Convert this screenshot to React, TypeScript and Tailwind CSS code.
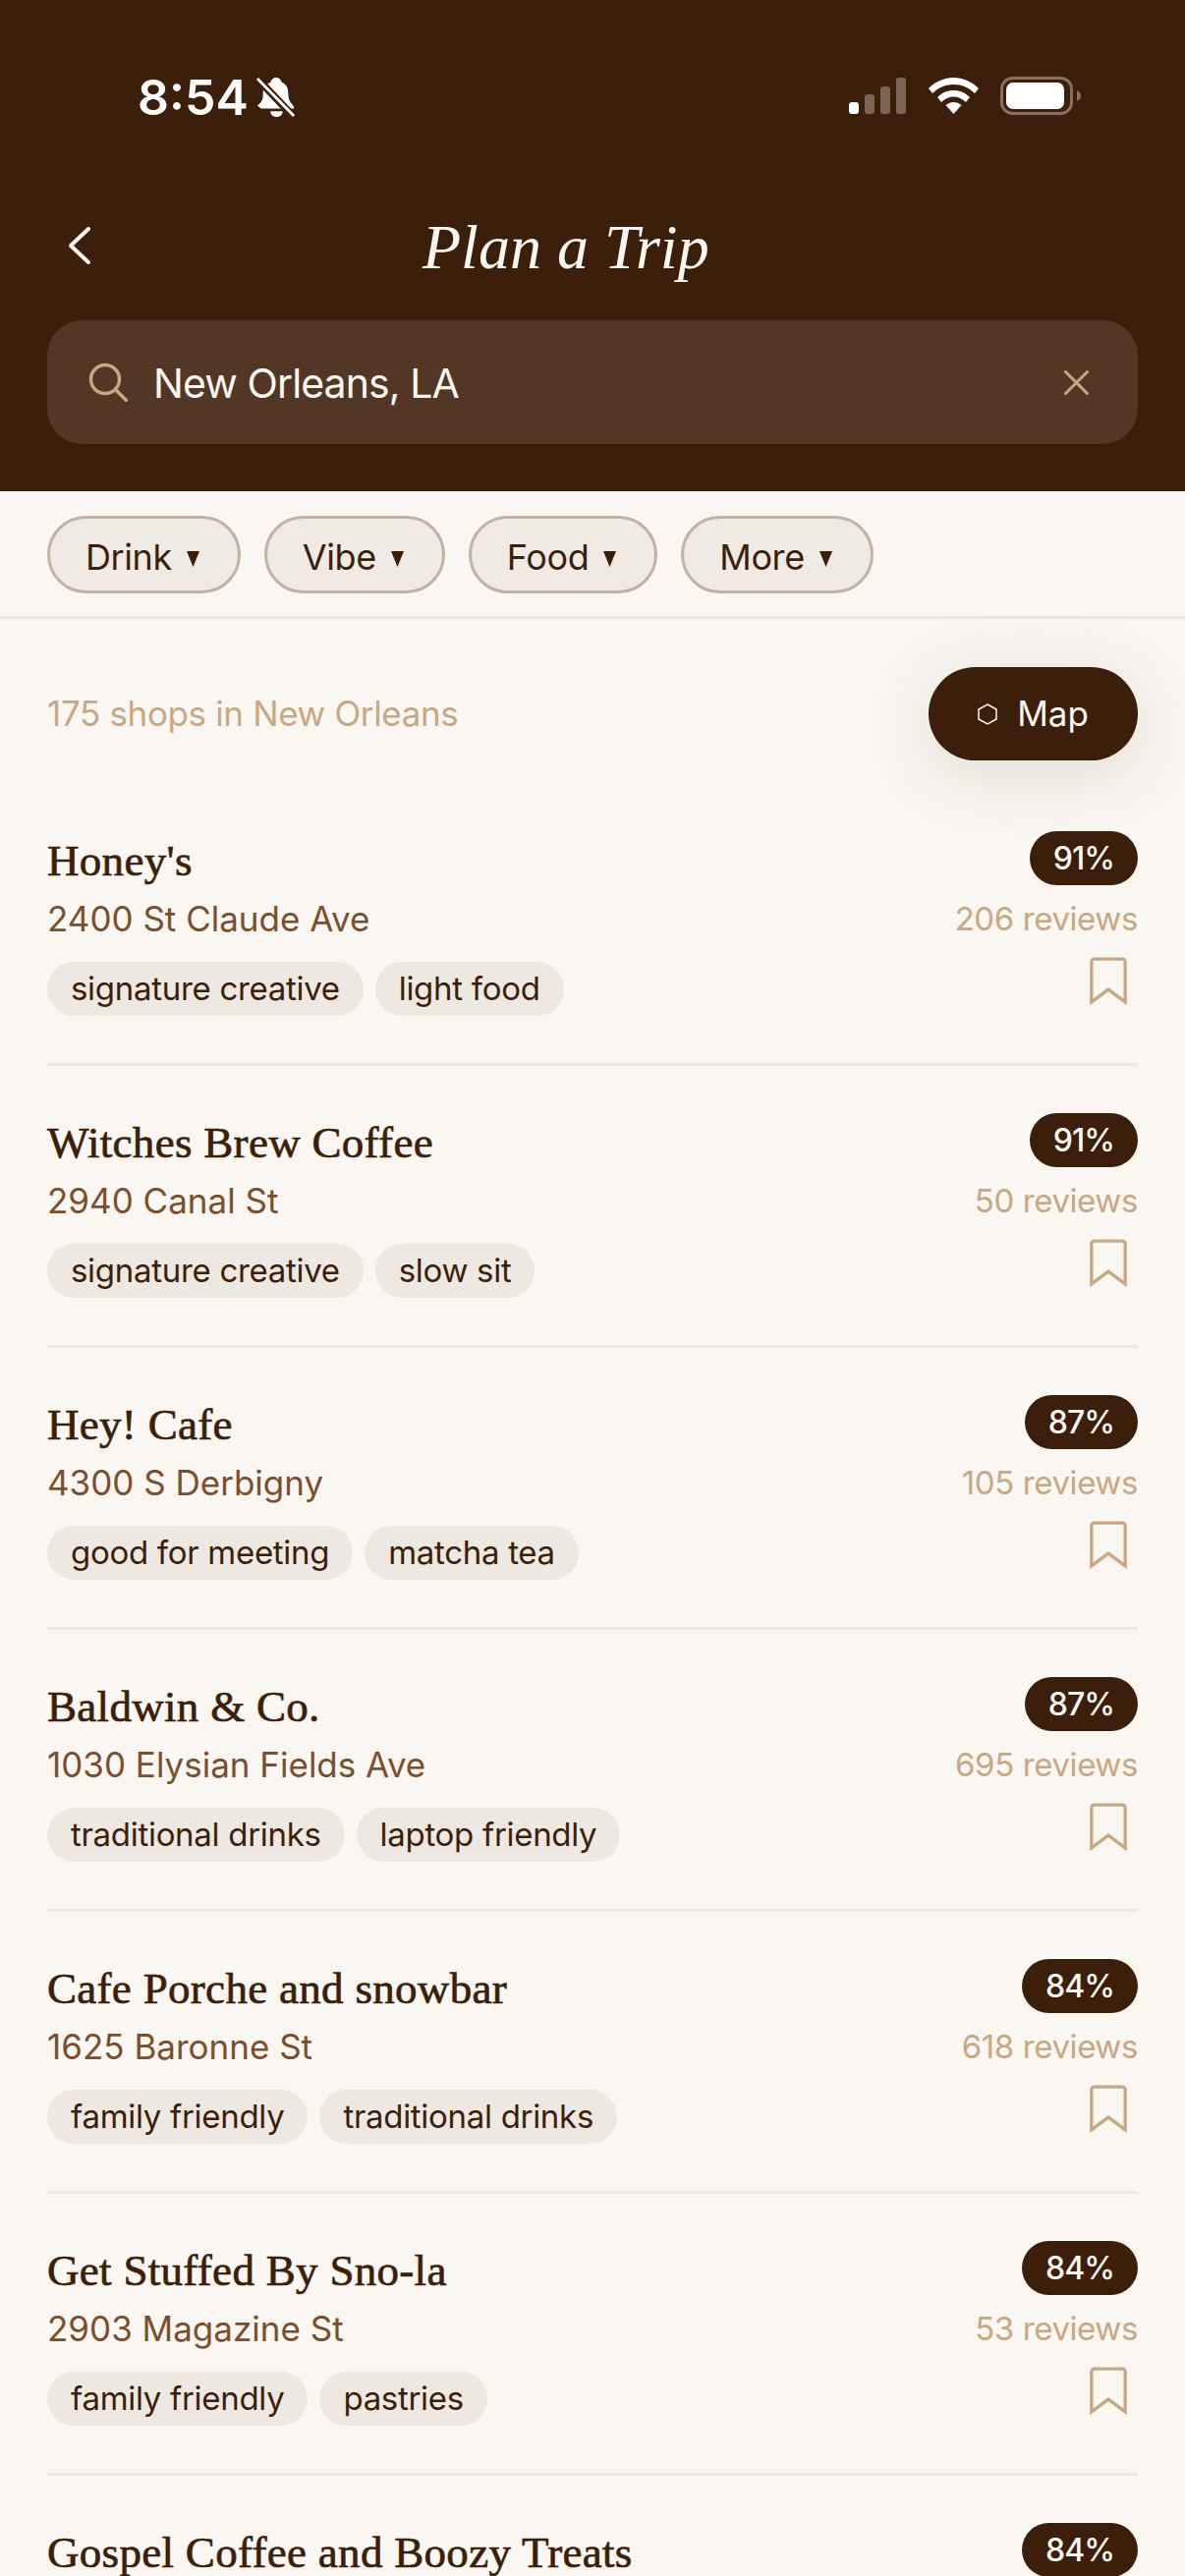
const shops = [
  { name: "Honey's", addr: "2400 St Claude Ave", score: "91%", reviews: "206 reviews", tags: ["signature creative", "light food"] },
  { name: "Witches Brew Coffee", addr: "2940 Canal St", score: "91%", reviews: "50 reviews", tags: ["signature creative", "slow sit"] },
  { name: "Hey! Cafe", addr: "4300 S Derbigny", score: "87%", reviews: "105 reviews", tags: ["good for meeting", "matcha tea"] },
  { name: "Baldwin & Co.", addr: "1030 Elysian Fields Ave", score: "87%", reviews: "695 reviews", tags: ["traditional drinks", "laptop friendly"] },
  { name: "Cafe Porche and snowbar", addr: "1625 Baronne St", score: "84%", reviews: "618 reviews", tags: ["family friendly", "traditional drinks"] },
  { name: "Get Stuffed By Sno-la", addr: "2903 Magazine St", score: "84%", reviews: "53 reviews", tags: ["family friendly", "pastries"] },
  { name: "Gospel Coffee and Boozy Treats", addr: "", score: "84%", reviews: "", tags: [] as string[] },
];

const filters = ["Drink", "Vibe", "Food", "More"];

function Row({ s }: { s: (typeof shops)[number] }) {
  return (
    <div className="flex justify-between h-[287px] shrink-0 pt-[48px] border-b-[3px] border-[#ede8e2] box-border">
      <div className="flex flex-col">
        <div className="h-[55px] leading-[55px] mt-[3px] text-[45px] tracking-[0.3px] text-[#3b1f0a] font-['Liberation_Serif',serif] [-webkit-text-stroke:0.7px_#3b1f0a] whitespace-nowrap">{s.name}</div>
        <div className="h-[46px] leading-[46px] mt-[8px] text-[35px] text-[#7b4f2e] whitespace-nowrap">{s.addr}</div>
        <div className="flex gap-[12px] mt-[21px]">
          {s.tags.map((t) => (
            <span key={t} className="h-[55px] leading-[55px] px-[24px] rounded-full bg-[#ede8e1] text-[33px] tracking-[-0.3px] text-[#3b1f0a] whitespace-nowrap">{t}</span>
          ))}
        </div>
      </div>
      <div className="flex flex-col items-end">
        <span className="h-[55px] leading-[55px] px-[24px] rounded-full bg-[#3b1f0a] text-[32px] tracking-[-1px] font-medium text-[#faf7f2]">{s.score}</span>
        <div className="h-[46px] leading-[46px] mt-[11px] text-[33px] tracking-[-0.4px] text-[#c8a882] whitespace-nowrap">{s.reviews}</div>
        {s.reviews && (
          <svg className="mt-[15px] mr-[10px]" width="40" height="50" viewBox="0 0 42 52" fill="none" stroke="#c8a882" strokeWidth="3.5">
            <path d="M3 49V6a3 3 0 0 1 3-3h30a3 3 0 0 1 3 3v43L21 35.500Z" />
          </svg>
        )}
      </div>
    </div>
  );
}

export default function App() {
  return (
    <div className="w-[1206px] h-[2622px] overflow-hidden bg-[#faf7f2] font-['Inter',sans-serif] flex flex-col">
      <header className="h-[500px] shrink-0 bg-[#3b1f0a] flex flex-col px-[48px]">
        <div className="flex justify-between items-start pt-[76px] h-[210px]">
          <div className="flex items-center pl-[92px] gap-[8px]">
            <span className="text-[50px] leading-[46px] font-semibold text-white">8:54</span>
            <svg width="40" height="44" viewBox="0 0 42 44" fill="white">
              <path d="M21 1c3 0 5 2 6 5 5 2 7 6 7 12 0 4 1 8 3 10l3 4v2H5l-4-3 3-3c3-3 3-6 3-10 0-6 3-10 8-12 1-3 3-5 6-5Z" />
              <path d="M15 37h13c0 4-3 6-6.500 6S15 41 15 37Z" />
              <path d="M1 2 39 42" stroke="#3b1f0a" strokeWidth="8" />
              <path d="M1 2 40 42" stroke="white" strokeWidth="3" />
            </svg>
          </div>
          <div className="flex items-start gap-[22px] pr-[58px] pt-[3px]">
            <svg width="59" height="37" viewBox="0 0 59 37">
              <rect x="0" y="25" width="10" height="12" rx="3" fill="white" />
              <rect x="16" y="17" width="10" height="20" rx="3" fill="#7b6455" />
              <rect x="32" y="9" width="10" height="28" rx="3" fill="#7b6455" />
              <rect x="48" y="0" width="10" height="37" rx="3" fill="#7b6455" />
            </svg>
            <svg width="51" height="37" viewBox="0 0 51 37" fill="white">
              <path d="M25.500 0C35 0 44 4 51 11l-4 5C41 10 33.500 7 25.500 7S10 10 4 16l-4-5C7 4 16 0 25.500 0Z" />
              <path d="M25.500 13c6.500 0 12 2.500 16.500 7l-4 5c-3.500-3.500-8-5.500-12.500-5.500S16.500 21.500 13 25l-4-5c4.500-4.500 10-7 16.500-7Z" />
              <path d="M25.500 25c3 0 5.500 1 8 3L25.500 37l-8-9c2.500-2 5-3 8-3Z" />
            </svg>
            <svg width="82" height="39" viewBox="0 0 82 39" className="-mt-[1px]">
              <rect x="1.500" y="1.500" width="71" height="36" rx="11" fill="none" stroke="#86705f" strokeWidth="3" />
              <rect x="6" y="6" width="59" height="27" rx="7" fill="white" />
              <path d="M78 14c3 1 4 3 4 5.500s-1 4.500-4 5.500Z" fill="#86705f" />
            </svg>
          </div>
        </div>
        <div className="h-[116px] flex items-start">
          <svg className="ml-[22px] mt-[21px]" width="22" height="38" viewBox="0 0 22 38" fill="none" stroke="#faf7f2" strokeWidth="4" strokeLinecap="round" strokeLinejoin="round">
            <path d="M20 2 2 19l18 17" />
          </svg>
          <div className="ml-[338px] mt-[6px] text-[64px] leading-[72px] italic text-[#faf7f2] font-['Liberation_Serif',serif] whitespace-nowrap">Plan a Trip</div>
        </div>
        <div className="h-[126px] rounded-[36px] bg-[#513724] flex items-center pl-[42px] pr-[50px]">
          <svg width="40" height="40" viewBox="0 0 40 40" fill="none" stroke="#c8a882" strokeWidth="3.500" strokeLinecap="round">
            <circle cx="17" cy="17" r="14.500" />
            <path d="M28 28 39 39" />
          </svg>
          <span className="ml-[26px] pt-[3px] text-[41px] tracking-[-0.9px] text-[#faf7f2]">New Orleans, LA</span>
          <svg className="ml-auto" width="25" height="25" viewBox="0 0 25 25" stroke="#c8a882" strokeWidth="3" strokeLinecap="round">
            <path d="M1.500 1.500l22 22M23.500 1.500l-22 22" />
          </svg>
        </div>
      </header>

      <div className="h-[130px] shrink-0 border-b-[3px] border-[#ede8e2] flex gap-[24px] px-[48px] pt-[25px] box-border">
        {filters.map((f) => (
          <div key={f} className="h-[79px] pl-[36px] pr-[39px] pt-[5px] rounded-full border-[3px] border-[#c2b2a2] bg-[#efeae4] flex items-center gap-[15px] text-[36px] tracking-[-0.4px] text-[#3b1f0a]">
            {f}
            <svg className="mt-[3px]" width="13" height="16" viewBox="0 0 13 16" fill="#3b1f0a">
              <path d="M0 0h13L6.500 16Z" />
            </svg>
          </div>
        ))}
      </div>

      <div className="h-[168px] shrink-0 px-[48px] pt-[49px] flex justify-between items-start">
        <span className="mt-[24px] text-[35px] tracking-[-0.35px] leading-[46px] text-[#c8a882]">175 shops in New Orleans</span>
        <div className="w-[213px] h-[95px] rounded-full bg-[#3b1f0a] flex items-center justify-center gap-[20px] text-[35px] text-[#faf7f2] shadow-[0_12px_72px_rgba(59,31,10,0.14)]">
          <svg width="20" height="22" viewBox="0 0 20 22" fill="none" stroke="#faf7f2" strokeWidth="1.500">
            <path d="M10 1l9 5v10l-9 5-9-5V6Z" />
          </svg>
          Map
        </div>
      </div>

      <div className="px-[48px] flex flex-col">
        {shops.map((s) => (
          <Row key={s.name} s={s} />
        ))}
      </div>
    </div>
  );
}
